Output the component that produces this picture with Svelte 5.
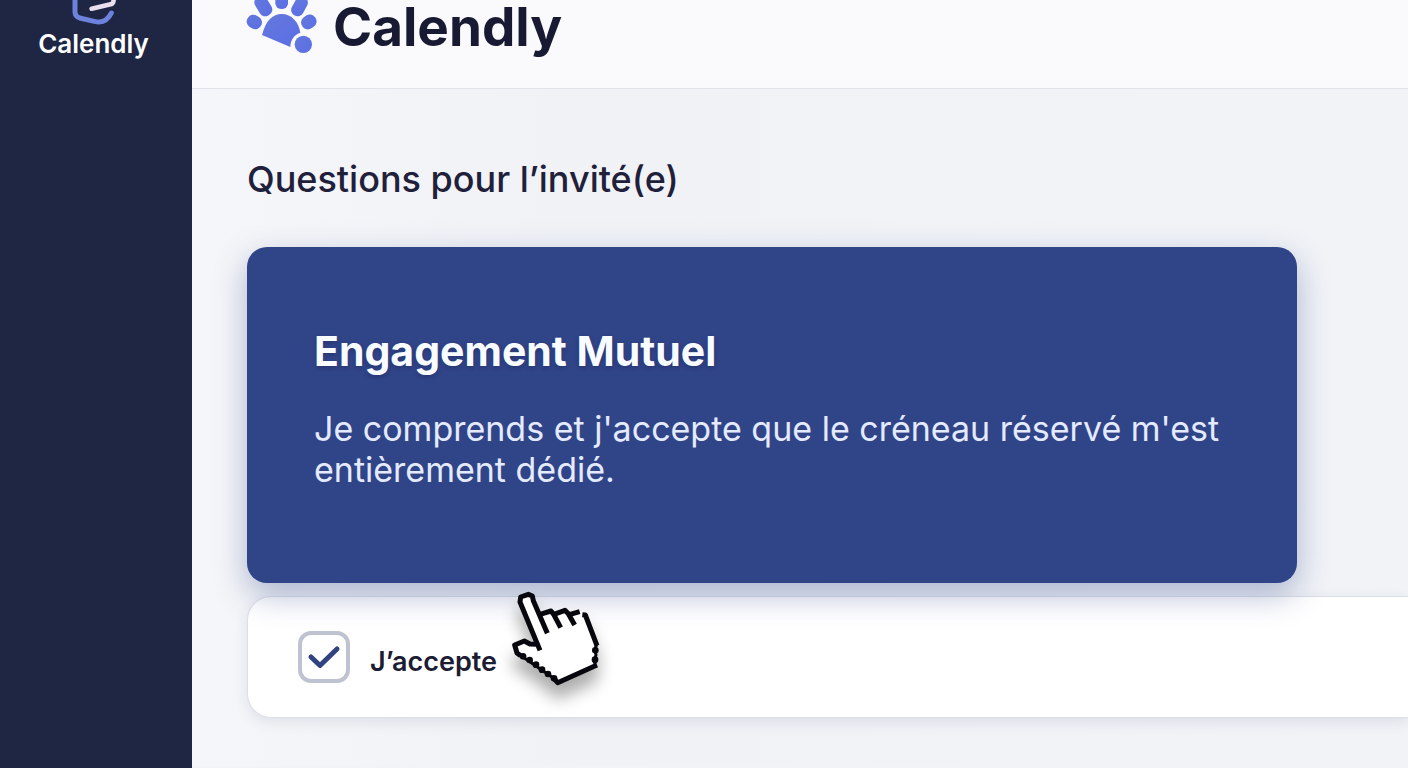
<script>
  let accepted = $state(true);
</script>

<div class="page">
  <aside class="sidebar">
    <svg class="mark" viewBox="209 0 144 75" aria-hidden="true">
      <path d="M224 -10V35Q224 49 238 54L282 64Q304 69 316 60Q327 52 333 39" fill="none" stroke="#6d82dc" stroke-width="15" stroke-linecap="round" />
      <path d="M274 26L334 12Q341 8 340 -8" fill="none" stroke="#eadfee" stroke-width="14" stroke-linecap="round" stroke-linejoin="round" />
    </svg>
    <span class="side-name">Calendly</span>
  </aside>

  <div class="main">
    <header class="topbar">
      <svg class="paw" viewBox="32 0 216 162" aria-hidden="true">
        <defs>
          <linearGradient id="pawfill" x1="0" y1="0" x2="1" y2="1">
            <stop offset="0" stop-color="#6478dc" />
            <stop offset="1" stop-color="#5b6ee6" />
          </linearGradient>
        </defs>
        <g fill="url(#pawfill)">
          <rect x="34" y="46" width="46" height="40" rx="19" transform="rotate(32 57 66)" />
          <rect x="64" y="-14" width="40" height="64" rx="18" transform="rotate(-31 84 18)" />
          <rect x="120" y="-36" width="38" height="63" rx="17" />
          <rect x="174" y="-12" width="38" height="62" rx="18" transform="rotate(29 193 18)" />
          <rect x="197" y="46" width="47" height="40" rx="19" transform="rotate(-35 220 66)" />
          <path d="M80 105C86 84 93 68 103 58C123 37 157 37 177 59C188 70 192 82 195 98C178 104 166 117 165 141Z" />
          <circle cx="204" cy="133" r="26" />
        </g>
      </svg>
      <span class="brand">Calendly</span>
    </header>

    <main class="content">
      <h1>Questions pour l’invité(e)</h1>

      <section class="pledge">
        <h2>Engagement Mutuel</h2>
        <p>Je comprends et j'accepte que le créneau réservé m'est entièrement dédié.</p>
      </section>

      <section class="answer">
        <label>
          <span class="box">
            <input type="checkbox" bind:checked={accepted} />
            {#if accepted}
              <svg viewBox="0 0 52 52" aria-hidden="true">
                <path d="M13 26L22 34.5L39 18" fill="none" stroke="#30427f" stroke-width="5" stroke-linecap="round" stroke-linejoin="round" />
              </svg>
            {/if}
          </span>
          <span class="label-text">J’accepte</span>
        </label>
        <svg class="hand" viewBox="60 60 285 300" aria-hidden="true">
          <path fill="#fff" d="M90 97L92 82L115 73L129 80L152 134L182 124L195 135L225 123L240 137L268 128L283 135L321 228L314 243L320 257L314 270L315 291L204 341L82 253L72 229L103 214L120 225L143 225Z" />
          <g fill="none" stroke="#07070d" stroke-width="15" stroke-linejoin="round">
            <path d="M150 244L90 99L92 84L115 76L127 81L130 95L172 193" />
            <path d="M150 136L183 126L191 136L212 176" />
            <path d="M192 136L225 124L235 134L254 168" />
            <path d="M238 137L269 128" />
            <path d="M277 137L286 138L321 230" />
            <path d="M321 288L203 341L192 329" />
            <path d="M142 226L120 225L103 216L74 228L81 252L92 260" />
            <path stroke-width="9" d="M90 258L200 334M320 225L315 243L318 258L314 270L315 293" />
          </g>
          <g fill="#07070d">
            <circle cx="99" cy="262" r="10" />
            <circle cx="119" cy="273" r="10" />
            <circle cx="138" cy="287" r="10" />
            <circle cx="156" cy="302" r="10" />
            <circle cx="174" cy="315" r="10" />
            <circle cx="192" cy="328" r="10" />
            <circle cx="316" cy="244" r="10" />
            <circle cx="315" cy="272" r="10" />
          </g>
        </svg>
      </section>
    </main>
  </div>
</div>

<style>
  :global(body) {
    margin: 0;
    background: #f1f3f7;
  }
  .page {
    display: flex;
    min-height: 100vh;
    font-family: Inter, "Liberation Sans", sans-serif;
    color: #1c1c33;
  }
  .sidebar {
    box-sizing: border-box;
    flex: 0 0 192px;
    display: flex;
    flex-direction: column;
    align-items: center;
    padding-right: 5px;
    background: #1e2643;
  }
  .mark {
    width: 48px;
    height: 25px;
  }
  .side-name {
    margin-top: 3px;
    font-size: 26px;
    line-height: 32px;
    font-weight: 600;
    color: #fff;
  }
  .main {
    flex: 1;
    min-width: 0;
  }
  .topbar {
    display: flex;
    align-items: flex-start;
    gap: 15px;
    height: 88px;
    padding-left: 54px;
    background: #fafafc;
    border-bottom: 1px solid #e0e3ea;
  }
  .paw {
    width: 72px;
    height: 54px;
  }
  .brand {
    font-size: 53px;
    line-height: 54px;
    font-weight: 700;
    color: #171a32;
  }
  .content {
    padding: 66px 0 48px 55px;
    background: linear-gradient(90deg, #f5f6f9, #f0f2f6 30%, #f1f3f7);
  }
  h1 {
    margin: 0 0 44px;
    font-size: 36px;
    line-height: 48px;
    font-weight: 500;
    color: #20203a;
  }
  .pledge {
    position: relative;
    z-index: 1;
    box-sizing: border-box;
    margin-right: 111px;
    padding: 77px 48px 93px 67px;
    border-radius: 20px;
    background: #304488;
    box-shadow: 0 12px 32px rgba(48, 68, 136, 0.36);
  }
  h2 {
    margin: 0 0 30px;
    font-size: 41px;
    line-height: 54px;
    font-weight: 700;
    color: #f8fbff;
    text-shadow: 0 2px 4px rgba(16, 24, 60, 0.3);
  }
  .pledge p {
    margin: 0;
    font-size: 34px;
    line-height: 41px;
    color: #e4eaff;
  }
  .answer {
    position: relative;
    margin-top: 13px;
    padding: 34px 50px;
    background: #fff;
    border: 1px solid #dcdfe8;
    border-right: 0;
    border-radius: 24px 0 0 24px;
    box-shadow: 0 4px 14px rgba(40, 50, 90, 0.1);
  }
  label {
    position: relative;
    z-index: 2;
    display: flex;
    width: fit-content;
    align-items: flex-end;
    gap: 8px;
  }
  .box {
    display: grid;
    width: 52px;
    height: 52px;
  }
  .box > * {
    grid-area: 1 / 1;
    width: 52px;
    height: 52px;
  }
  input {
    appearance: none;
    box-sizing: border-box;
    margin: 0;
    background: #fff;
    border: 4px solid #bfc3d1;
    border-radius: 13px;
  }
  .box svg {
    pointer-events: none;
  }
  .label-text {
    padding: 8px 12px 4px;
    border-radius: 12px;
    background: #fff;
    font-size: 27px;
    line-height: 34px;
    font-weight: 600;
  }
  .hand {
    position: absolute;
    z-index: 3;
    left: 262px;
    top: -8px;
    width: 95px;
    height: 100px;
    overflow: visible;
    pointer-events: none;
    filter: drop-shadow(0 14px 8px rgba(0, 0, 0, 0.32));
  }
</style>
